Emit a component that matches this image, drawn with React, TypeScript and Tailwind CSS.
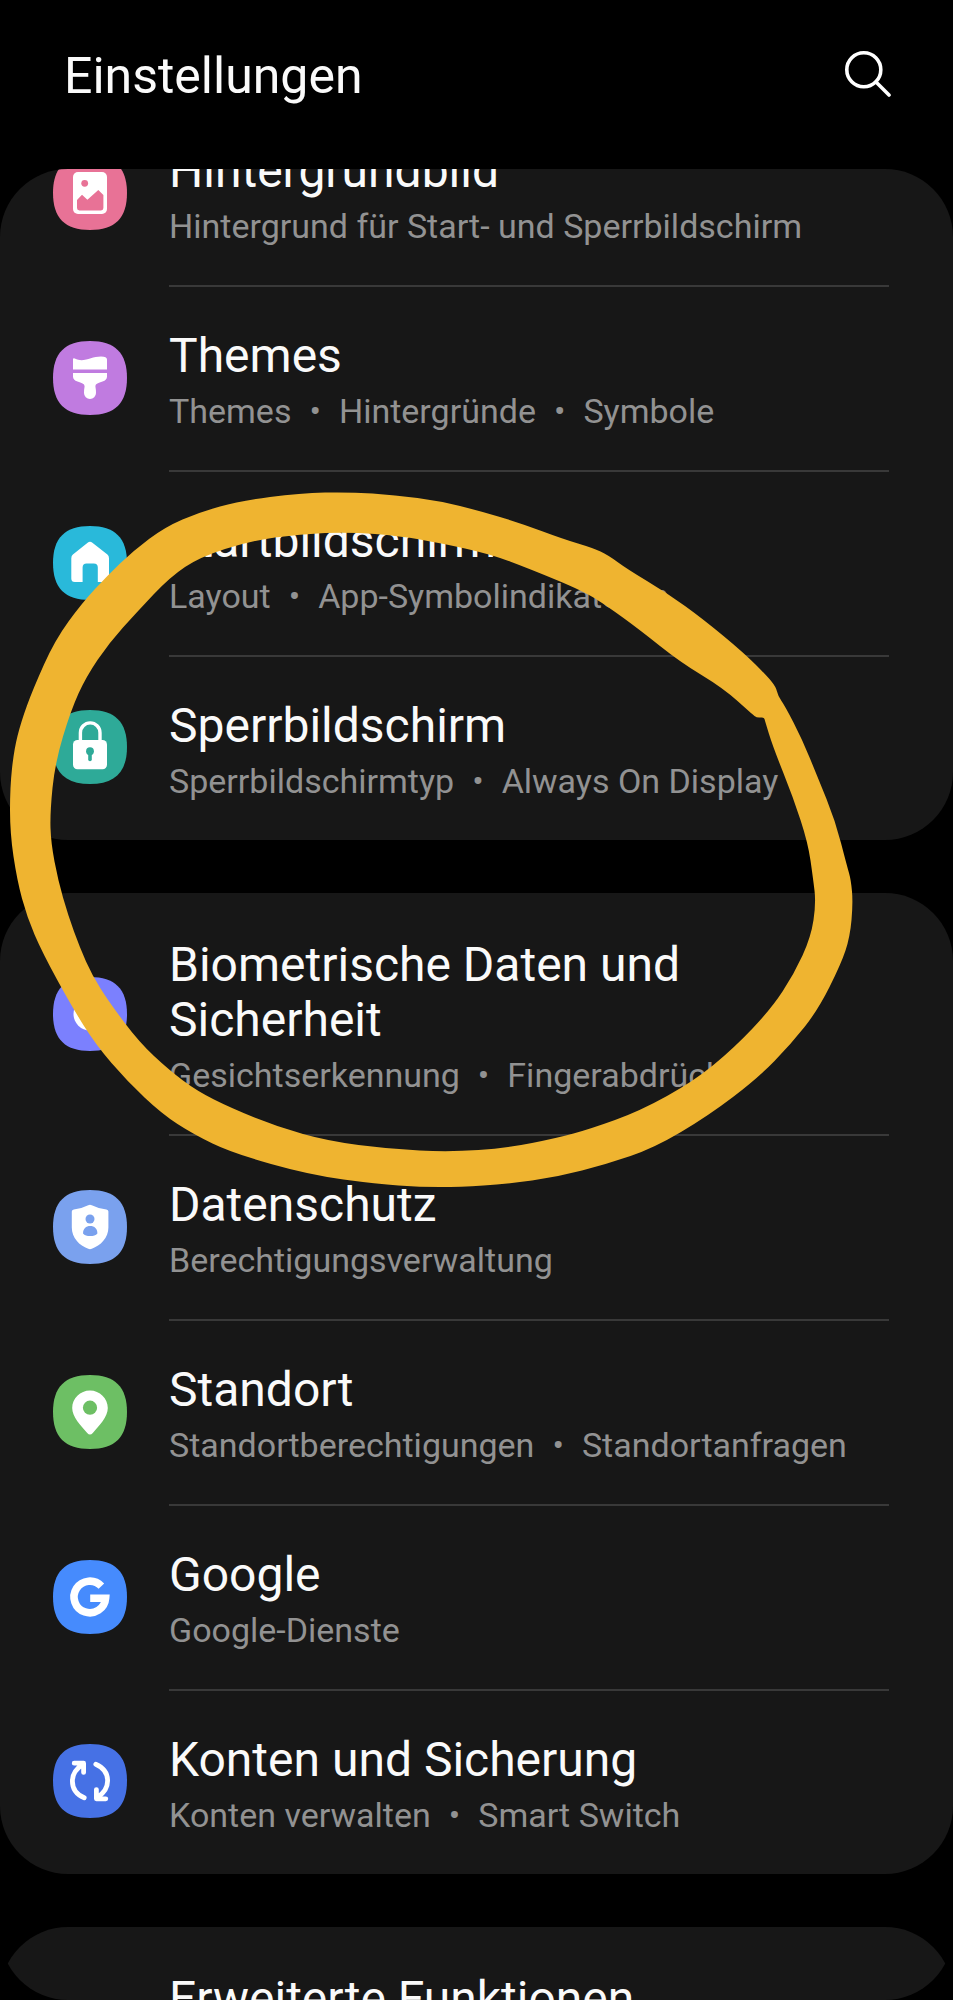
import { Fragment } from "react";
import type { ReactNode } from "react";

interface SettingsItem {
  id: string;
  title: string;
  details: string[];
  color?: string;
  icon?: ReactNode;
}

const wallpaperIcon = (
  <>
    <rect x="20" y="16" width="34" height="42" rx="5" fill="#fff" />
    <circle cx="31.7" cy="27.3" r="3.4" />
    <path d="M24 44 29 38.8 34.4 43.8 45.3 34 50.4 39V52Q50.4 54.4 48 54.4H26.4Q24 54.4 24 52Z" />
  </>
);

const themesIcon = (
  <g fill="#fff">
    <path d="M20 18.5Q20 16.8 21.8 17.6C31 22 38 15.6 48 15.6Q54 15.6 54 18.5V28.4H20Z" />
    <path d="M20 32H54V35.5Q54 39 49.5 40.6C45.5 42 42.4 42.6 42.4 45.5Q43 48.5 43 52A6 6 0 0 1 31 52Q31 48.5 31.6 45.5C31.6 42.6 28.5 42 24.5 40.6Q20 39 20 35.5Z" />
  </g>
);

const homeIcon = (
  <path
    fill="#fff"
    d="M34.6 16.8Q37 14.6 39.4 16.8L54.4 28.6Q56 30 56 32.2V52.5Q56 56 52.5 56H44.8V41.5Q44.8 37.5 40.8 37.5H33.6Q29.6 37.5 29.6 41.5V56H21.8Q18.3 56 18.3 52.5V32.2Q18.3 30 19.9 28.6Z"
  />
);

const lockIcon = (
  <>
    <path d="M27.4 32V22.7A9.8 9.8 0 0 1 47 22.7V32" fill="none" stroke="#fff" strokeWidth="3.4" />
    <rect x="20" y="30" width="34" height="29.2" rx="4.5" fill="#fff" />
    <circle cx="37" cy="41.2" r="3.9" />
    <path d="M35.2 42H38.8V49.4A1.8 1.8 0 0 1 35.2 49.4Z" />
  </>
);

const securityIcon = <circle cx="37" cy="37" r="16.5" fill="#fff" />;

const privacyIcon = (
  <>
    <path
      fill="#fff"
      d="M35.2 15.3Q37 14.4 38.8 15.3 45 18.6 53.4 19.4 55.4 19.6 55.4 21.6V37.5C55.4 48 47.5 55.5 38.8 58.8Q37 59.5 35.2 58.8C26.5 55.5 18.8 48 18.8 37.5V21.6Q18.8 19.6 20.8 19.4 29 18.6 35.2 15.3Z"
    />
    <circle cx="37" cy="29" r="4.5" />
    <path d="M30 43.4C30 38.6 33 36 37.2 36S44.4 38.6 44.4 43.4Q42 46 37.2 46T30 43.4Z" />
  </>
);

const locationIcon = (
  <>
    <path
      fill="#fff"
      d="M37 15.5C46.8 15.5 54.8 23.4 54.8 33 54.8 42 46.5 50 39.8 58Q37 61 34.2 58C27.5 50 19.2 42 19.2 33 19.2 23.4 27.2 15.5 37 15.5Z"
    />
    <circle cx="37" cy="32.7" r="7.1" />
  </>
);

const googleIcon = (
  <path
    d="M48.4 26.2A15.8 15.8 0 1 0 52.6 38.2H37.2"
    fill="none"
    stroke="#fff"
    strokeWidth="7.6"
  />
);

const syncIcon = (
  <g fill="none" stroke="#fff" strokeWidth="4.8" strokeLinecap="round" strokeLinejoin="round">
    <path d="M31.2 53.8C22.5 50 19.4 43.5 19.4 37.2 19.4 31 22.8 25 29.6 20.6M21.2 19.2H30.6V28.4" />
    <path d="M42.8 20.2C51.5 24 54.6 30.5 54.6 36.8 54.6 43 51.2 49 44.4 53.4M52.8 54.8H43.4V45.6" />
  </g>
);

const groups: SettingsItem[][] = [
  [
    {
      id: "wallpaper",
      title: "Hintergrundbild",
      details: ["Hintergrund für Start- und Sperrbildschirm"],
      color: "text-[#e87296]",
      icon: wallpaperIcon,
    },
    {
      id: "themes",
      title: "Themes",
      details: ["Themes", "Hintergründe", "Symbole"],
      color: "text-[#c07be0]",
      icon: themesIcon,
    },
    {
      id: "home",
      title: "Startbildschirm",
      details: ["Layout", "App-Symbolindikatoren"],
      color: "text-[#29b9da]",
      icon: homeIcon,
    },
    {
      id: "lock",
      title: "Sperrbildschirm",
      details: ["Sperrbildschirmtyp", "Always On Display"],
      color: "text-[#2eaa98]",
      icon: lockIcon,
    },
  ],
  [
    {
      id: "security",
      title: "Biometrische Daten und Sicherheit",
      details: ["Gesichtserkennung", "Fingerabdrücke"],
      color: "text-[#7b80fe]",
      icon: securityIcon,
    },
    {
      id: "privacy",
      title: "Datenschutz",
      details: ["Berechtigungsverwaltung"],
      color: "text-[#7aa1ee]",
      icon: privacyIcon,
    },
    {
      id: "location",
      title: "Standort",
      details: ["Standortberechtigungen", "Standortanfragen"],
      color: "text-[#6dbf64]",
      icon: locationIcon,
    },
    {
      id: "google",
      title: "Google",
      details: ["Google-Dienste"],
      color: "text-[#468bfd]",
      icon: googleIcon,
    },
    {
      id: "accounts",
      title: "Konten und Sicherung",
      details: ["Konten verwalten", "Smart Switch"],
      color: "text-[#4671e5]",
      icon: syncIcon,
    },
  ],
  [{ id: "advanced", title: "Erweiterte Funktionen", details: [] }],
];

type Point = [number, number];

const markerOuter: Point[] = [
  [350, 492], [300, 493], [240, 501], [200, 512], [165, 527], [133, 551],
  [107, 576], [82, 603], [55, 640], [33, 689], [21, 722], [14, 750],
  [10, 787], [10, 833], [17, 880], [27, 917], [42, 952], [72, 1007],
  [96, 1045], [127, 1081], [162, 1114], [193, 1134], [232, 1153], [310, 1175],
  [377, 1184], [420, 1187], [460, 1187], [507, 1184], [557, 1177], [607, 1164],
  [654, 1148], [708, 1116], [758, 1078], [791, 1044], [818, 1010], [841, 964],
  [850, 937], [853, 903], [851, 880], [847, 866], [835, 820], [818, 778],
  [802, 739], [785, 706], [778, 696], [776, 687], [767, 676], [744, 653],
  [703, 619], [667, 593], [627, 569], [608, 555], [593, 548], [563, 539],
  [520, 523], [480, 511], [440, 501], [395, 495],
];

const markerInner: Point[] = [
  [350, 532], [400, 536], [440, 543], [490, 554], [530, 569], [583, 591],
  [607, 606], [640, 630], [680, 662], [723, 688], [752, 714], [757, 718],
  [764, 717], [765, 721], [773, 747], [793, 797], [808, 843], [813, 878],
  [816, 903], [811, 937], [794, 974], [771, 1009], [734, 1048], [694, 1081],
  [640, 1111], [590, 1129], [557, 1138], [507, 1148], [450, 1152], [389, 1149],
  [328, 1141], [278, 1127], [231, 1108], [197, 1091], [169, 1070], [139, 1042],
  [109, 1002], [92, 975], [80, 948], [68, 915], [58, 880], [51, 843],
  [50, 813], [55, 763], [71, 710], [86, 677], [109, 643], [137, 612],
  [170, 577], [200, 557], [250, 541], [300, 534],
];

// closed curve through the midpoints of neighbouring points
const smoothPath = (points: Point[]) => {
  const mid = (a: Point, b: Point) => `${(a[0] + b[0]) / 2} ${(a[1] + b[1]) / 2}`;
  const last = points[points.length - 1];
  const curves = points.map((point, index) => {
    const next = points[(index + 1) % points.length];
    return `Q${point[0]} ${point[1]} ${mid(point, next)}`;
  });
  return `M${mid(last, points[0])}${curves.join("")}Z`;
};

const MarkerCircle = () => (
  <svg
    className="pointer-events-none absolute left-0 top-0 h-[2000px] w-[953px]"
    viewBox="0 0 953 2000"
    aria-hidden="true"
  >
    <path
      d={`${smoothPath(markerOuter)}${smoothPath(markerInner)}`}
      fill="#efb430"
      fillRule="evenodd"
    />
  </svg>
);

const ItemIcon = ({ color, children }: { color?: string; children: ReactNode }) => (
  <svg
    className={`mb-1 size-[74px] shrink-0 fill-current ${color}`}
    viewBox="0 0 74 74"
    aria-hidden="true"
  >
    <path d="M37 0C62 0 74 12 74 37S62 74 37 74 0 62 0 37 12 0 37 0Z" />
    {children}
  </svg>
);

const SettingsRow = ({ item, divider }: { item: SettingsItem; divider: boolean }) => (
  <li>
    <a href={`#${item.id}`} className="flex items-center gap-[42px] pl-[53px] pr-16">
      {item.icon ? (
        <ItemIcon color={item.color}>{item.icon}</ItemIcon>
      ) : (
        <div className="w-[74px] shrink-0" />
      )}
      <div
        className={`min-w-0 flex-1 pb-[39px] pt-[41px] ${
          divider ? "border-b-2 border-[#393939]" : ""
        }`}
      >
        <h2 className="mb-2 pr-4 text-5xl leading-[55px] text-[#fafafa]">{item.title}</h2>
        <p className="text-[34px] leading-[40px] text-[#929292]">
          {item.details.map((detail, index) => (
            <Fragment key={detail}>
              {index > 0 && <span className="mx-[18px]">•</span>}
              {detail}
            </Fragment>
          ))}
        </p>
      </div>
    </a>
  </li>
);

const App = () => {
  return (
    <div className="relative flex h-screen flex-col overflow-hidden bg-black font-['Roboto',sans-serif]">
      <header className="flex h-[169px] shrink-0 items-center justify-between pb-[18px] pl-16 pr-[62px]">
        <h1 className="text-[50px] leading-[60px] text-[#fafafa]">Einstellungen</h1>
        <button type="button" aria-label="Suchen" className="pb-1">
          <svg
            className="size-[46px] fill-none stroke-white stroke-[3.6px]"
            viewBox="0 0 46 46"
            strokeLinecap="round"
            aria-hidden="true"
          >
            <circle cx="18.8" cy="18.8" r="17" />
            <path d="M31 31 44 44" />
          </svg>
        </button>
      </header>

      <main className="min-h-0 flex-1 overflow-hidden rounded-[68px]">
        {/* list is scrolled part of the way past its first row */}
        <div className="-mt-[70px] flex flex-col gap-[53px]">
          {groups.map((group) => (
            <ul key={group[0].id} className="rounded-[68px] bg-[#171717] pt-[3px]">
              {group.map((item, index) => (
                <SettingsRow
                  key={item.id}
                  item={item}
                  divider={index + 1 < group.length}
                />
              ))}
            </ul>
          ))}
        </div>
      </main>

      <MarkerCircle />
    </div>
  );
};

export default App;
